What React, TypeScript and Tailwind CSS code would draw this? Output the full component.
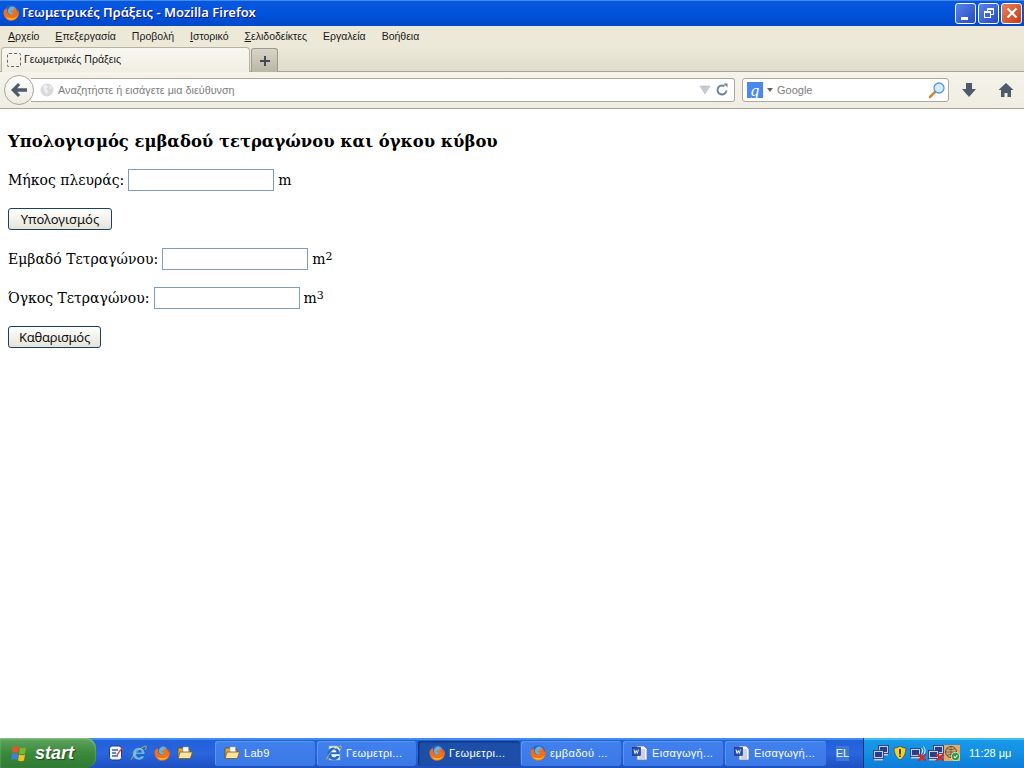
import React from 'react';

const uiFont = "font-['Liberation_Sans',sans-serif]";

const menuItems: [string, string][] = [
  ['Α', 'ρχείο'],
  ['Ε', 'πεξεργασία'],
  ['', 'Προβολή'],
  ['Ι', 'στορικό'],
  ['Σ', 'ελιδοδείκτες'],
  ['', 'Εργαλεία'],
  ['', 'Βοήθεια'],
];

const FirefoxIcon = ({ size = 16 }: { size?: number }) => (
  <svg width={size} height={size} viewBox="0 0 16 16" className="shrink-0">
    <circle cx="8.200" cy="7.800" r="7.500" fill="#2f63b8" />
    <circle cx="9.200" cy="6" r="4.400" fill="#62b2ea" />
    <path d="M0.500 7.500C0.500 12.200 4 15.800 8.300 15.800c4.200 0 7.400-3.200 7.500-7.200.1-1.700-.5-3.300-1.300-4.300.3 1.500.1 2.500-.4 3.400-.2-2.200-1.600-4.200-3.600-5.600.8 1.600.3 2.800-.8 3.400-1.300.1-2.300.5-2.600 1.300.8.600 1.900.5 2.700.8.1 1-1 2.200-2.600 2.100-1.700-.1-2.800-1.600-2.800-3.300-.4-.7-.5-1.900-.2-3.200C1.800 3.800.7 5.500.5 7.500z" fill="#f0701a" />
    <path d="M2.500 11.200c1.300 2.500 3.500 3.600 5.800 3.600 2.800 0 5.300-1.800 6.300-4.600-1.500 2.100-3.600 3.200-5.800 3-2.300-.1-4.700-.6-6.300-2z" fill="#fbbd24" />
  </svg>
);

const WordIcon = () => (
  <svg width="16" height="16" viewBox="0 0 16 16" className="shrink-0">
    <path d="M5 1h7l3 3v11H5z" fill="#f4f6fb" stroke="#6a7fa8" strokeWidth="0.8" />
    <path d="M9 5h4M9 7h4M9 9h4M7 11h6M7 13h6" stroke="#8aa0c8" strokeWidth="0.8" />
    <rect x="0.500" y="2.500" width="8" height="8" fill="#2b4fa8" stroke="#16306e" strokeWidth="0.6" />
    <path d="M2 4.500l1 4 1.200-3 1.200 3 1-4" fill="none" stroke="#fff" strokeWidth="0.9" />
  </svg>
);

const FolderIcon = () => (
  <svg width="16" height="16" viewBox="0 0 16 16" className="shrink-0">
    <path d="M1 3h5l1.500 1.500H13V13H1z" fill="#d9a63f" stroke="#5e5028" strokeWidth="0.8" />
    <path d="M6 2h5.500v7H6z" fill="#fff" stroke="#999" strokeWidth="0.5" />
    <path d="M3 7h12.500l-2.200 6.500H1.200z" fill="#fbe39a" stroke="#6e5c30" strokeWidth="0.8" />
  </svg>
);

const IeIcon = ({ page }: { page?: boolean }) => (
  <svg width="16" height="16" viewBox="0 0 16 16" className="shrink-0">
    {page ? <path d="M3 1h8l3 3v11H3z" fill="#fff" stroke="#8aa0c8" strokeWidth="0.8" /> : null}
    <path d="M1.500 8.800C1.500 5.200 4.300 2.500 7.900 2.500c3.500 0 6.100 2.800 6.100 6.800H5.300c0 1.900 1.100 3 2.700 3 1 0 1.800-.5 2.200-1.300h3.400c-.8 2.600-3 4-5.600 4-3.600 0-6.500-2.600-6.500-6.200zM5.400 7.300h5c-.1-1.400-1-2.300-2.500-2.300S5.600 5.900 5.400 7.300z" fill={page ? '#1f6fd0' : '#62bcf5'} fillRule="evenodd" stroke={page ? 'none' : '#15418f'} strokeWidth="0.4" />
    <path d="M0.500 14.500C2 9 9 2.500 14.500 1c1.200 0 1 1.800-.2 3.800" fill="none" stroke="#e9c04a" strokeWidth="0.8" />
  </svg>
);

const FormIcon = () => (
  <svg width="16" height="16" viewBox="0 0 16 16" className="shrink-0">
    <rect x="1.500" y="1" width="12" height="14" rx="2.500" fill="#f2f6fc" stroke="#1c3f86" strokeWidth="1" />
    <path d="M4 5h6M4 8h4M4 11h6" stroke="#3a66b4" strokeWidth="1.300" />
    <path d="M9 10l5-7" stroke="#e14f2b" strokeWidth="1.300" />
  </svg>
);

const MonitorIcon = ({ x = 0, y = 0 }: { x?: number; y?: number }) => (
  <g transform={`translate(${x} ${y})`}>
    <rect x="0.500" y="0.500" width="10" height="8" fill="#c5cce0" stroke="#26345c" strokeWidth="0.8" />
    <rect x="2" y="2" width="7" height="5" fill="#23408f" />
    <rect x="1" y="9" width="9" height="1.500" fill="#e2e5ec" stroke="#5b6478" strokeWidth="0.3" />
  </g>
);

const RedX = () => (
  <path d="M8.500 9.500l7 6M15.500 9.500l-7 6" stroke="#e2231a" strokeWidth="2" strokeLinecap="round" />
);

function TaskButton({ w, icon, label, active }: { w: string; icon: React.ReactNode; label: string; active?: boolean }) {
  return (
    <div
      className={`flex h-[25px] items-center gap-[4px] rounded-[3px] text-[11px] text-white ${w} ${
        active
          ? 'bg-[#1e4fa8] pl-[11px] shadow-[inset_1px_1px_2px_#0f2f70]'
          : 'bg-gradient-to-b from-[#4181ee] to-[#3a78e6] pl-[9px] shadow-[inset_1px_1px_0_#5c97f3]'
      }`}
    >
      {icon}
      <span className="whitespace-nowrap tracking-[0.3px]">{label}</span>
    </div>
  );
}

function Row({ label, unit }: { label: string; unit: React.ReactNode }) {
  return (
    <div className="mt-[17px] flex h-[22px] items-center">
      {label}
      <input className="ml-[4px] mr-[4px] h-[22px] w-[146px] border border-[#7f9db9] bg-white" />
      {unit}
    </div>
  );
}

export default function App() {
  return (
    <div className={`flex h-[768px] w-[1024px] flex-col overflow-hidden bg-white ${uiFont}`}>
      {/* title bar */}
      <div className="flex h-[26px] shrink-0 items-center bg-gradient-to-b from-[#0a58e0] via-[#0253dc] to-[#0048c8] pl-[3px] pr-[2px] shadow-[inset_0_1px_0_#3c8cf4]">
        <FirefoxIcon />
        <span className="ml-[3px] font-['Noto_Sans',sans-serif] text-[13px] font-semibold text-white [text-shadow:1px_1px_#0f1089]">
          Γεωμετρικές Πράξεις - Mozilla Firefox
        </span>
        <div className="ml-auto flex gap-[2px]">
          <div className="flex h-[21px] w-[21px] items-end rounded-[3px] border border-white bg-gradient-to-br from-[#5b83e8] to-[#2449c4] pb-[3px] pl-[5px]">
            <div className="h-[3px] w-[7px] bg-white" />
          </div>
          <div className="flex h-[21px] w-[21px] items-center justify-center rounded-[3px] border border-white bg-gradient-to-br from-[#5b83e8] to-[#2449c4]">
            <svg width="12" height="12" viewBox="0 0 12 12" fill="none" stroke="#fff">
              <rect x="1.500" y="4.500" width="6" height="6" strokeWidth="1" />
              <path d="M1.500 5.500h6" strokeWidth="1" />
              <path d="M4.500 4V1.500h6v6H8" strokeWidth="1" />
              <path d="M4.500 2.500h6" strokeWidth="1" />
            </svg>
          </div>
          <div className="flex h-[21px] w-[21px] items-center justify-center rounded-[3px] border border-white bg-gradient-to-br from-[#e8815c] to-[#c33a12]">
            <svg width="12" height="12" viewBox="0 0 12 12" stroke="#fff" strokeWidth="2">
              <path d="M1.500 1.500l9 9M10.500 1.500l-9 9" />
            </svg>
          </div>
        </div>
      </div>

      {/* menu bar */}
      <div className="flex h-[21px] shrink-0 items-center gap-[16px] bg-[#ece9d8] pl-[8px] text-[10.5px] text-[#1a1a1a]">
        {menuItems.map(([first, rest]) => (
          <span key={rest}>
            {first ? <span className="underline">{first}</span> : null}
            {rest}
          </span>
        ))}
      </div>

      {/* tab strip */}
      <div className="flex h-[25px] shrink-0 items-end bg-gradient-to-b from-[#ece9d8] to-[#dfdccb] pl-px shadow-[inset_0_-1px_0_#a8a598]">
        <div className="flex h-[25px] w-[249px] items-center gap-[3px] rounded-t-[4px] border border-b-0 border-[#b5b2a4] bg-gradient-to-b from-[#f8f7f0] to-[#f1efe4] pl-[5px] text-[10.6px] text-[#1a1a1a]">
          <div className="h-[14px] w-[14px] rounded-[2px] border border-dashed border-[#666]" />
          <span>Γεωμετρικές Πράξεις</span>
        </div>
        <div className="ml-px flex h-[24px] w-[27px] items-center justify-center rounded-t-[3px] border border-b-0 border-[#9c9a8c] bg-gradient-to-b from-[#d8d5c6] to-[#b9b6a6]">
          <svg width="12" height="12" viewBox="0 0 12 12" stroke="#3f4a57" strokeWidth="2">
            <path d="M6 1v10M1 6h10" />
          </svg>
        </div>
      </div>

      {/* nav bar */}
      <div className="flex h-[37px] shrink-0 items-center border-b border-[#a8a598] bg-gradient-to-b from-[#f5f3ea] to-[#f0eee2] pl-[4px]">
        <div className="relative z-10 flex h-[30px] w-[30px] items-center justify-center rounded-full border border-[#a8a79c] bg-gradient-to-b from-white to-[#eceae0]">
          <svg width="18" height="16" viewBox="0 0 18 16" fill="#4d5b6a">
            <path d="M8 1l2.200 2-3 3.200H17v3.600H7.200l3 3.200L8 15 1 8z" />
          </svg>
        </div>
        <div className="-ml-[3px] flex h-[24px] w-[704px] items-center rounded-r-[3px] border border-l-0 border-[#aaa89c] bg-white pl-[9px] pr-[3px]">
          <svg width="14" height="14" viewBox="0 0 14 14" className="shrink-0">
            <circle cx="7" cy="7" r="6.500" fill="#dadada" />
            <path d="M3 3l3-1 2 2-2 2 2 2-1 3-2-2-1-3zM9 2l3 3-2 1z" fill="#f2f2f2" />
          </svg>
          <span className="ml-[4px] text-[10.8px] text-[#7d7d7d]">Αναζητήστε ή εισάγετε μια διεύθυνση</span>
          <svg width="12" height="10" viewBox="0 0 12 10" className="ml-auto shrink-0" fill="#c4ccd4" stroke="#a9b2bb" strokeWidth="0.5">
            <path d="M1 1h10L6 9z" />
          </svg>
          <svg width="14" height="14" viewBox="0 0 14 14" className="ml-[4px] mr-[2px] shrink-0" fill="none" stroke="#6f8599" strokeWidth="2">
            <path d="M11.500 7.500A4.500 4.500 0 1 1 9.500 3.200" />
            <path d="M8.500 0.500l4 0v4z" fill="#6f8599" stroke="none" />
          </svg>
        </div>
        <div className="ml-[7px] flex h-[24px] w-[207px] items-center rounded-[3px] border border-[#aaa89c] bg-white pl-[4px] pr-[2px]">
          <div className="flex h-[16px] w-[16px] items-center justify-center bg-[#4a88ee] font-['Liberation_Serif',serif] text-[17px] italic leading-none text-white">
            g
          </div>
          <svg width="6" height="4" viewBox="0 0 6 4" className="ml-[4px]" fill="#666">
            <path d="M0 0h6L3 4z" />
          </svg>
          <span className="ml-[4px] text-[11px] text-[#7d7d7d]">Google</span>
          <svg width="18" height="18" viewBox="0 0 18 18" className="ml-auto shrink-0">
            <path d="M2 16l5-5" stroke="#c98a3c" strokeWidth="2.500" strokeLinecap="round" />
            <circle cx="11" cy="7" r="5" fill="#d3ecfb" stroke="#5b9ac8" strokeWidth="1.300" />
          </svg>
        </div>
        <svg width="16" height="16" viewBox="0 0 16 16" className="ml-[12px]" fill="#4d5b6a">
          <path d="M5 1h6v6h4l-7 8-7-8h4z" />
        </svg>
        <svg width="16" height="16" viewBox="0 0 16 16" className="ml-[21px]" fill="#4d5b6a">
          <path d="M8 1L0.500 8H3v7h3.500v-4h3v4H13V8h2.500z" />
        </svg>
      </div>

      {/* page */}
      <div className="flex min-h-0 flex-1 flex-col pl-[8px] pt-[22px] font-['DejaVu_Serif',serif] text-[14px] leading-[18px] text-black">
        <h1 className="text-[16.4px] font-bold leading-[22px]">
          Υπολογισμός εμβαδού τετραγώνου και όγκου κύβου
        </h1>
        <div className="-mt-px" />
        <Row label="Μήκος πλευράς:" unit="m" />
        <button className="mt-[17px] h-[22px] w-[104px] rounded-[3px] border border-[#1c3f66] bg-gradient-to-b from-white to-[#e6e4d8] font-['Noto_Sans',sans-serif] text-[13px] text-[#111]">
          Υπολογισμός
        </button>
        <div className="h-px" />
        <Row label="Εμβαδό Τετραγώνου:" unit={<>m<sup className="-top-[2px] text-[11px]">2</sup></>} />
        <Row label="Όγκος Τετραγώνου:" unit={<>m<sup className="-top-[2px] text-[11px]">3</sup></>} />
        <button className="mt-[17px] h-[22px] w-[93px] rounded-[3px] border border-[#1c3f66] bg-gradient-to-b from-white to-[#e6e4d8] font-['Noto_Sans',sans-serif] text-[13px] tracking-[-0.3px] text-[#111]">
          Καθαρισμός
        </button>
      </div>

      {/* taskbar */}
      <div className="flex h-[30px] shrink-0 items-center bg-gradient-to-b from-[#1f5fd8] via-[#2a66de] to-[#1d4fc0] shadow-[inset_0_2px_0_#3f8cf3]">
        <div className="flex h-[30px] w-[96px] items-center rounded-r-[10px] bg-gradient-to-b from-[#5fa35f] via-[#3c8a3c] to-[#2f7a33] pl-[11px] shadow-[inset_0_1px_2px_#8cc98c]">
          <svg width="19" height="19" viewBox="0 0 19 19" className="shrink-0">
            <path d="M2 3c2-1 4-1 6 0l-1 6c-2-1-4-1-6 0z" fill="#e8532a" />
            <path d="M9 3.500c2 1 4 1 6 0l-1 6c-2 1-4 1-6 0z" fill="#7ab82f" />
            <path d="M1 10c2-1 4-1 6 0l-1 6c-2-1-4-1-6 0z" fill="#3f7fe0" />
            <path d="M8 10.500c2 1 4 1 6 0l-1 6c-2 1-4 1-6 0z" fill="#f4c21f" />
          </svg>
          <span className="ml-[5px] text-[18px] font-bold italic text-white [text-shadow:1px_1px_1px_#1c4a1c]">
            start
          </span>
        </div>
        <div className="ml-[12px] flex w-[107px] items-center gap-[7px]">
          <FormIcon />
          <IeIcon />
          <FirefoxIcon />
          <FolderIcon />
        </div>
        <div className="flex items-center">
          <TaskButton w="w-[100px]" icon={<FolderIcon />} label="Lab9" />
          <div className="w-[2px]" />
          <TaskButton w="w-[99px]" icon={<IeIcon page />} label="Γεωμετρι..." />
          <div className="w-[2px]" />
          <TaskButton w="w-[102px]" icon={<FirefoxIcon />} label="Γεωμετρι..." active />
          <div className="w-px" />
          <TaskButton w="w-[100px]" icon={<FirefoxIcon />} label="εμβαδού ..." />
          <div className="w-[2px]" />
          <TaskButton w="w-[100px]" icon={<WordIcon />} label="Εισαγωγή..." />
          <div className="w-[2px]" />
          <TaskButton w="w-[101px]" icon={<WordIcon />} label="Εισαγωγή..." />
        </div>
        <div className="ml-[10px] flex h-[15px] w-[13px] items-center justify-center bg-[#3a78d8] text-[11px] text-white">EL</div>
        {/* tray */}
        <div className="ml-[14px] flex h-[30px] flex-1 items-center border-l border-[#10386e] bg-gradient-to-b from-[#1a9ae8] via-[#1290e4] to-[#0f7cd8] pl-[9px] shadow-[inset_0_2px_0_#3fc0f5]">
          <svg width="16" height="16" viewBox="0 0 16 16" className="shrink-0">
            <MonitorIcon x={5} y={0} />
            <MonitorIcon x={0} y={5} />
          </svg>
          <svg width="16" height="16" viewBox="0 0 16 16" className="ml-[3px] shrink-0">
            <path d="M8 1c2 1.500 4 2 6 2 0 5-2 9.500-6 12C4 12.500 2 8 2 3c2 0 4-.5 6-2z" fill="#f6d21c" stroke="#33476e" strokeWidth="0.8" />
            <path d="M7.200 4h1.600v5.500H7.200zM7.200 10.500h1.600V12H7.200z" fill="#222" />
          </svg>
          <svg width="16" height="16" viewBox="0 0 16 16" className="ml-[2px] shrink-0">
            <MonitorIcon x={0} y={3} />
            <path d="M11.500 3c1.500 1.500 1.500 4 0 5.500M13.500 1.500c2 2.500 2 6 0 8.500" fill="none" stroke="#fff" strokeWidth="0.9" />
            <RedX />
          </svg>
          <svg width="16" height="16" viewBox="0 0 16 16" className="ml-[2px] shrink-0">
            <MonitorIcon x={5} y={0} />
            <MonitorIcon x={0} y={5} />
            <RedX />
          </svg>
          <svg width="16" height="16" viewBox="0 0 16 16" className="shrink-0">
            <rect width="16" height="16" fill="#e8a860" />
            <circle cx="7" cy="7" r="5.500" fill="#c9a878" stroke="#4a3a22" strokeWidth="0.8" />
            <path d="M7 1.500v11M1.500 7h11M3 3.500c2.500 1.500 5.500 1.500 8 0M3 10.500c2.500-1.500 5.500-1.500 8 0" fill="none" stroke="#4a3a22" strokeWidth="0.6" />
            <circle cx="11.500" cy="11.500" r="4.200" fill="#2e9e3e" stroke="#fff" strokeWidth="0.7" />
            <path d="M9.800 11.500l1.300 1.300 2.200-2.400" fill="none" stroke="#fff" strokeWidth="1.100" />
          </svg>
          <span className="ml-[9px] text-[11px] text-white">11:28 μμ</span>
        </div>
      </div>
    </div>
  );
}
